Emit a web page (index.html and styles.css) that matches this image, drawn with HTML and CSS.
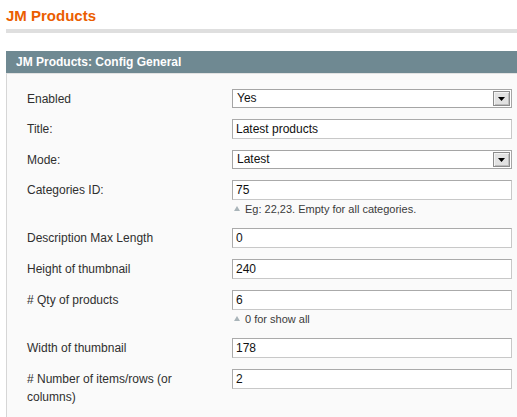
FILE: index.html
```html
<!DOCTYPE html>
<html>
<head>
<meta charset="utf-8">
<link rel="stylesheet" href="styles.css">
</head>
<body>
<div class="page">
  <div class="content-header">
    <h3 class="page-title">JM Products</h3>
  </div>
  <div class="section">
    <div class="section-head">JM Products: Config General</div>
    <div class="fieldset">
      <div class="row">
        <div class="label">Enabled</div>
        <div class="value">
          <div class="select"><span class="select-text">Yes</span><span class="select-btn"><svg width="7" height="4" viewBox="0 0 7 4"><path d="M0 0H7L3.5 4Z" fill="#000"/></svg></span></div>
        </div>
      </div>
      <div class="row">
        <div class="label">Title:</div>
        <div class="value"><input class="input-text" type="text" value="Latest products"></div>
      </div>
      <div class="row">
        <div class="label">Mode:</div>
        <div class="value">
          <div class="select"><span class="select-text">Latest</span><span class="select-btn"><svg width="7" height="4" viewBox="0 0 7 4"><path d="M0 0H7L3.5 4Z" fill="#000"/></svg></span></div>
        </div>
      </div>
      <div class="row">
        <div class="label">Categories ID:</div>
        <div class="value">
          <input class="input-text" type="text" value="75">
          <div class="note"><svg class="note-arrow" width="6" height="5" viewBox="0 0 6 5"><path d="M0 5L3 0L6 5Z" fill="#a9b4b9"/></svg><span>Eg: 22,23. Empty for all categories.</span></div>
        </div>
      </div>
      <div class="row">
        <div class="label">Description Max Length</div>
        <div class="value"><input class="input-text" type="text" value="0"></div>
      </div>
      <div class="row">
        <div class="label">Height of thumbnail</div>
        <div class="value"><input class="input-text" type="text" value="240"></div>
      </div>
      <div class="row">
        <div class="label"># Qty of products</div>
        <div class="value">
          <input class="input-text" type="text" value="6">
          <div class="note"><svg class="note-arrow" width="6" height="5" viewBox="0 0 6 5"><path d="M0 5L3 0L6 5Z" fill="#a9b4b9"/></svg><span>0 for show all</span></div>
        </div>
      </div>
      <div class="row">
        <div class="label">Width of thumbnail</div>
        <div class="value"><input class="input-text" type="text" value="178"></div>
      </div>
      <div class="row">
        <div class="label"># Number of items/rows (or columns)</div>
        <div class="value"><input class="input-text" type="text" value="2"></div>
      </div>
    </div>
  </div>
</div>
</body>
</html>
```

FILE: styles.css
```css
html, body {
  margin: 0;
  padding: 0;
  background: #ffffff;
  font-family: "Liberation Sans", Arial, sans-serif;
  font-size: 12px;
  color: #2f2f2f;
}

.page {
  padding-left: 6px;
  height: 417px;
  overflow: hidden;
  display: flex;
  flex-direction: column;
}

.content-header {
  padding-top: 7px;
  padding-bottom: 4px;
  border-bottom: 4px solid #dfdfdf;
}

.page-title {
  margin: 0;
  font-size: 15px;
  line-height: 18px;
  font-weight: bold;
  color: #eb5e00;
}

.section {
  margin-top: 18px;
  flex: 1;
  display: flex;
  flex-direction: column;
}

.section-head {
  height: 22px;
  line-height: 22px;
  padding-left: 10px;
  background: #6f8992;
  color: #ffffff;
  font-weight: bold;
  font-size: 12px;
}

.fieldset {
  flex: 1;
  background: #fafafa;
  border-left: 1px solid #d6d6d6;
  border-top: 1px solid #e2e2e2;
  padding: 15px 0 0 20px;
  display: flex;
  flex-direction: column;
  gap: 11px;
}

.row {
  display: flex;
  align-items: flex-start;
}

.label {
  width: 195px;
  padding-right: 10px;
  padding-top: 1px;
  line-height: 18px;
  color: #2f2f2f;
}

.value {
  width: 280px;
}

.input-text {
  display: block;
  box-sizing: border-box;
  width: 280px;
  height: 20px;
  margin: 0;
  padding: 0 3px;
  border: 1px solid;
  border-color: #aaaaaa #c8c8c8 #c8c8c8 #aaaaaa;
  background: #ffffff;
  font-family: "Liberation Sans", Arial, sans-serif;
  font-size: 12px;
  color: #111111;
  outline: none;
}

.select {
  box-sizing: border-box;
  width: 280px;
  height: 19px;
  border: 1px solid #a5a5a5;
  background: #ffffff;
  padding: 1px;
  display: flex;
  align-items: stretch;
}

.select-text {
  flex: 1;
  padding-left: 3px;
  line-height: 15px;
  font-size: 12px;
  color: #111111;
}

.select-btn {
  box-sizing: border-box;
  width: 17px;
  border: 1px solid #8c8c8c;
  box-shadow: inset 1px 1px 0 #f4f4f4, inset -1px -1px 0 #bdbdbd;
  background: #e2e2e2;
  display: flex;
  align-items: center;
  justify-content: center;
}

.note {
  height: 17px;
  padding-top: 1px;
  box-sizing: border-box;
  line-height: 16px;
  font-size: 11px;
  color: #3a3a3a;
  display: flex;
  align-items: center;
  gap: 5px;
  padding-left: 2px;
}

.note-arrow {
  flex: none;
  margin-top: -1px;
}
```
